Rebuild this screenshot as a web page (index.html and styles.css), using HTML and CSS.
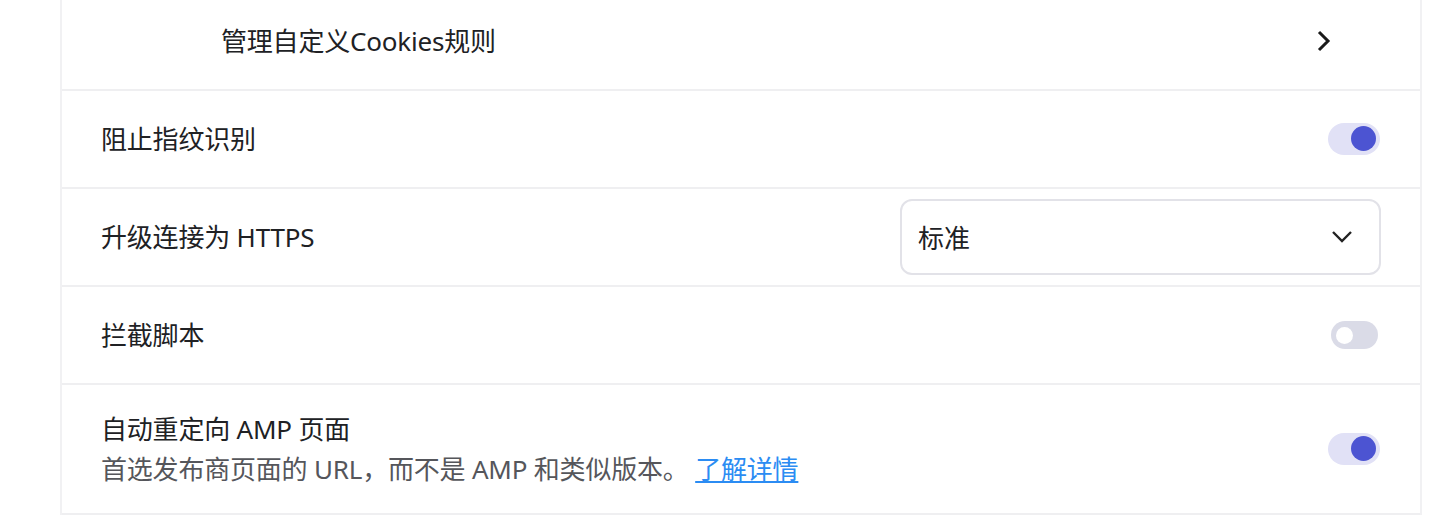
FILE: index.html
```html
<!DOCTYPE html>
<html lang="zh-CN">
<head>
  <meta charset="UTF-8" />
  <meta name="viewport" content="width=device-width, initial-scale=1.0"/>
  <title>隐私和安全</title>
  <link rel="stylesheet" href="styles.css">
</head>
<body>
  <div class="card">
    <div class="row sub-row">
      <span class="label">管理自定义Cookies规则</span>
      <svg class="chevron-right" width="16" height="24" viewBox="0 0 16 24">
        <path d="M3 3 L12 12 L3 21" fill="none" stroke="#1a1a1a" stroke-width="3"/>
      </svg>
    </div>
    <div class="row">
      <span class="label">阻止指纹识别</span>
      <div class="toggle on"><span class="knob"></span></div>
    </div>
    <div class="row">
      <span class="label">升级连接为 HTTPS</span>
      <div class="select">
        <span>标准</span>
        <svg width="22" height="14" viewBox="0 0 22 14">
          <path d="M2 2 L11 11 L20 2" fill="none" stroke="#222" stroke-width="2.4"/>
        </svg>
      </div>
    </div>
    <div class="row">
      <span class="label">拦截脚本</span>
      <div class="toggle off"><span class="knob"></span></div>
    </div>
    <div class="row tall">
      <div class="text">
        <div class="label">自动重定向 AMP 页面</div>
        <div class="secondary">首选发布商页面的 URL，而不是 AMP 和类似版本。 <a href="#">了解详情</a></div>
      </div>
      <div class="toggle on"><span class="knob"></span></div>
    </div>
  </div>
</body>
</html>
```

FILE: styles.css
```css
body {
  margin: 0;
  background-color: #ffffff;
  font-family: "Noto Sans", "Noto Sans CJK SC", sans-serif;
  overflow: hidden;
}
.card {
  margin: -7px 0 0 60px;
  width: 1358px;
  background-color: #fff;
  border-left: 2px solid #f1f1f3;
  border-right: 2px solid #f1f1f3;
}
.row {
  display: flex;
  align-items: center;
  justify-content: space-between;
  height: 96px;
  padding: 0 39px 0 39px;
  border-bottom: 2px solid #efeff1;
}
.row.sub-row {
  padding-left: 159px;
  padding-right: 88px;
}
.row.tall {
  height: 128px;
}
.label {
  font-size: 26px;
  line-height: 40px;
  letter-spacing: -0.2px;
  color: #202124;
}
.secondary {
  font-size: 26px;
  line-height: 40px;
  letter-spacing: -0.2px;
  color: #55565b;
}
.secondary a {
  color: #2b8cf3;
  text-decoration: underline;
}
.chevron-right {
  display: block;
}
.toggle {
  position: relative;
  border-radius: 16px;
  margin-right: 1px;
}
.toggle.on {
  width: 52px;
  height: 32px;
  background-color: #e1e1f6;
}
.toggle.on .knob {
  position: absolute;
  right: 4px;
  top: 3px;
  width: 25px;
  height: 25px;
  border-radius: 50%;
  background-color: #4c54d2;
}
.toggle.off {
  width: 47px;
  height: 28px;
  margin-right: 3px;
  background-color: #dadbe7;
}
.toggle.off .knob {
  position: absolute;
  left: 5px;
  top: 5.5px;
  width: 17px;
  height: 17px;
  border-radius: 50%;
  background-color: #fff;
}
.select {
  display: flex;
  align-items: center;
  justify-content: space-between;
  box-sizing: border-box;
  width: 481px;
  height: 76px;
  padding: 0 26px 0 16px;
  border: 2px solid #e2e2e8;
  border-radius: 12px;
  font-size: 26px;
  color: #202124;
}
.select svg {
  display: block;
}
```
